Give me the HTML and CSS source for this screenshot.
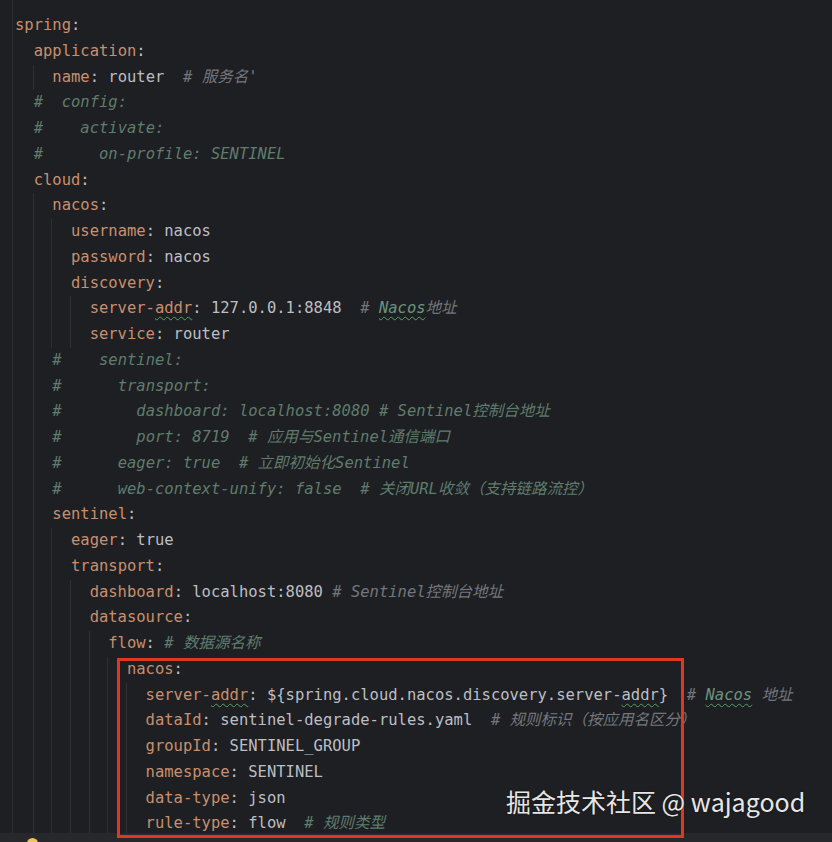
FILE: index.html
```html
<!DOCTYPE html>
<html lang="zh">
<head>
<meta charset="utf-8">
<title>application.yml</title>
<link rel="stylesheet" href="styles.css">
</head>
<body>
<div class="editor">
  <div class="code">
    <div class="ln"><span class="k">spring</span>:</div>
    <div class="blk root">
      <div class="ln"><span class="k">application</span>:</div>
      <div class="blk">
        <div class="ln"><span class="k">name</span>: router  <span class="c"># 服务名'</span></div>
      </div>
      <div class="ln cg">#  config:</div>
      <div class="ln cg">#    activate:</div>
      <div class="ln cg">#      on-profile: SENTINEL</div>
      <div class="ln"><span class="k">cloud</span>:</div>
      <div class="blk">
        <div class="ln"><span class="k">nacos</span>:</div>
        <div class="blk">
          <div class="ln"><span class="k">username</span>: nacos</div>
          <div class="ln"><span class="k">password</span>: nacos</div>
          <div class="ln"><span class="k">discovery</span>:</div>
          <div class="blk">
            <div class="ln"><span class="k">server-<span class="typo">addr</span></span>: 127.0.0.1:8848  <span class="c"># <span class="typo cn">Nacos</span>地址</span></div>
            <div class="ln"><span class="k">service</span>: router</div>
          </div>
        </div>
        <div class="ln cg">#    sentinel:</div>
        <div class="ln cg">#      transport:</div>
        <div class="ln cg">#        dashboard: localhost:8080 # Sentinel控制台地址</div>
        <div class="ln cg">#        port: 8719  # 应用与Sentinel通信端口</div>
        <div class="ln cg">#      eager: true  # 立即初始化Sentinel</div>
        <div class="ln cg">#      web-context-unify: false  # 关闭URL收敛（支持链路流控）</div>
        <div class="ln"><span class="k">sentinel</span>:</div>
        <div class="blk">
          <div class="ln"><span class="k">eager</span>: true</div>
          <div class="ln"><span class="k">transport</span>:</div>
          <div class="blk">
            <div class="ln"><span class="k">dashboard</span>: localhost:8080 <span class="c"># Sentinel控制台地址</span></div>
            <div class="ln"><span class="k">datasource</span>:</div>
            <div class="blk">
              <div class="ln"><span class="k">flow</span>: <span class="c cgc"># 数据源名称</span></div>
              <div class="blk">
                <div class="ln"><span class="k">nacos</span>:</div>
                <div class="blk">
                  <div class="ln"><span class="k">server-<span class="typo">addr</span></span>: ${spring.cloud.nacos.discovery.server-<span class="typo">addr</span>}  <span class="c"># <span class="typo cn">Nacos</span> 地址</span></div>
                  <div class="ln"><span class="k">dataId</span>: sentinel-degrade-rules.yaml  <span class="c"># 规则标识（按应用名区分）</span></div>
                  <div class="ln"><span class="k">groupId</span>: SENTINEL_GROUP</div>
                  <div class="ln"><span class="k">namespace</span>: SENTINEL</div>
                  <div class="ln"><span class="k">data-type</span>: json</div>
                  <div class="ln"><span class="k">rule-type</span>: flow  <span class="c cgc"># 规则类型</span></div>
                </div>
              </div>
            </div>
          </div>
        </div>
      </div>
    </div>
  </div>
  <div class="strip"></div>
  <div class="highlight-box"></div>
  <div class="bulb"></div>
  <div class="watermark">掘金技术社区 @ wajagood</div>
</div>
</body>
</html>
```

FILE: styles.css
```css
html, body {
  margin: 0;
  padding: 0;
  background: #1e1f22;
}

.editor {
  position: relative;
  width: 832px;
  height: 842px;
  overflow: hidden;
  display: flex;
  flex-direction: column;
  background: #1e1f22;
}

.code {
  flex: 1;
  min-height: 0;
  overflow: hidden;
  margin-left: 12px;
  border-left: 1px solid #2c2e32;
  padding: 13px 0 0 2px;
  font-family: "DejaVu Sans Mono", "Noto Sans CJK SC", monospace;
  font-size: 15.5px;
  color: #bcbec4;
}

.ln {
  white-space: pre;
  line-height: 25.75px;
  height: 25.75px;
}

.blk {
  margin-left: -1px;
  border-left: 1px solid #2c2e32;
  padding-left: 2ch;
}

.blk.root {
  margin-left: 0;
  border-left: none;
}

.k {
  color: #c78f6e;
}

.c {
  color: #73777d;
  font-style: italic;
}

.cg,
.cgc {
  color: #5f7c6d;
  font-style: italic;
}

.cn {
  color: #6a9480;
}

.typo {
  text-decoration: underline wavy #58a06a;
  text-decoration-thickness: 1px;
  text-underline-offset: 3px;
}

.strip {
  height: 9px;
  flex: none;
  background: #26282c;
}

.highlight-box {
  position: absolute;
  left: 117px;
  top: 658px;
  width: 567px;
  height: 180px;
  box-sizing: border-box;
  border: 3px solid #e1361f;
}

.bulb {
  position: absolute;
  left: 27px;
  top: 838px;
  width: 11px;
  height: 11px;
  border-radius: 50%;
  background: #f0c45a;
}

.watermark {
  position: absolute;
  left: 506px;
  top: 784px;
  font-family: "Noto Sans CJK SC", "Noto Sans", sans-serif;
  font-size: 25px;
  line-height: 34px;
  color: #e6e6e6;
  white-space: nowrap;
  text-shadow: 0 0 2px rgba(0, 0, 0, 0.5);
}
```
